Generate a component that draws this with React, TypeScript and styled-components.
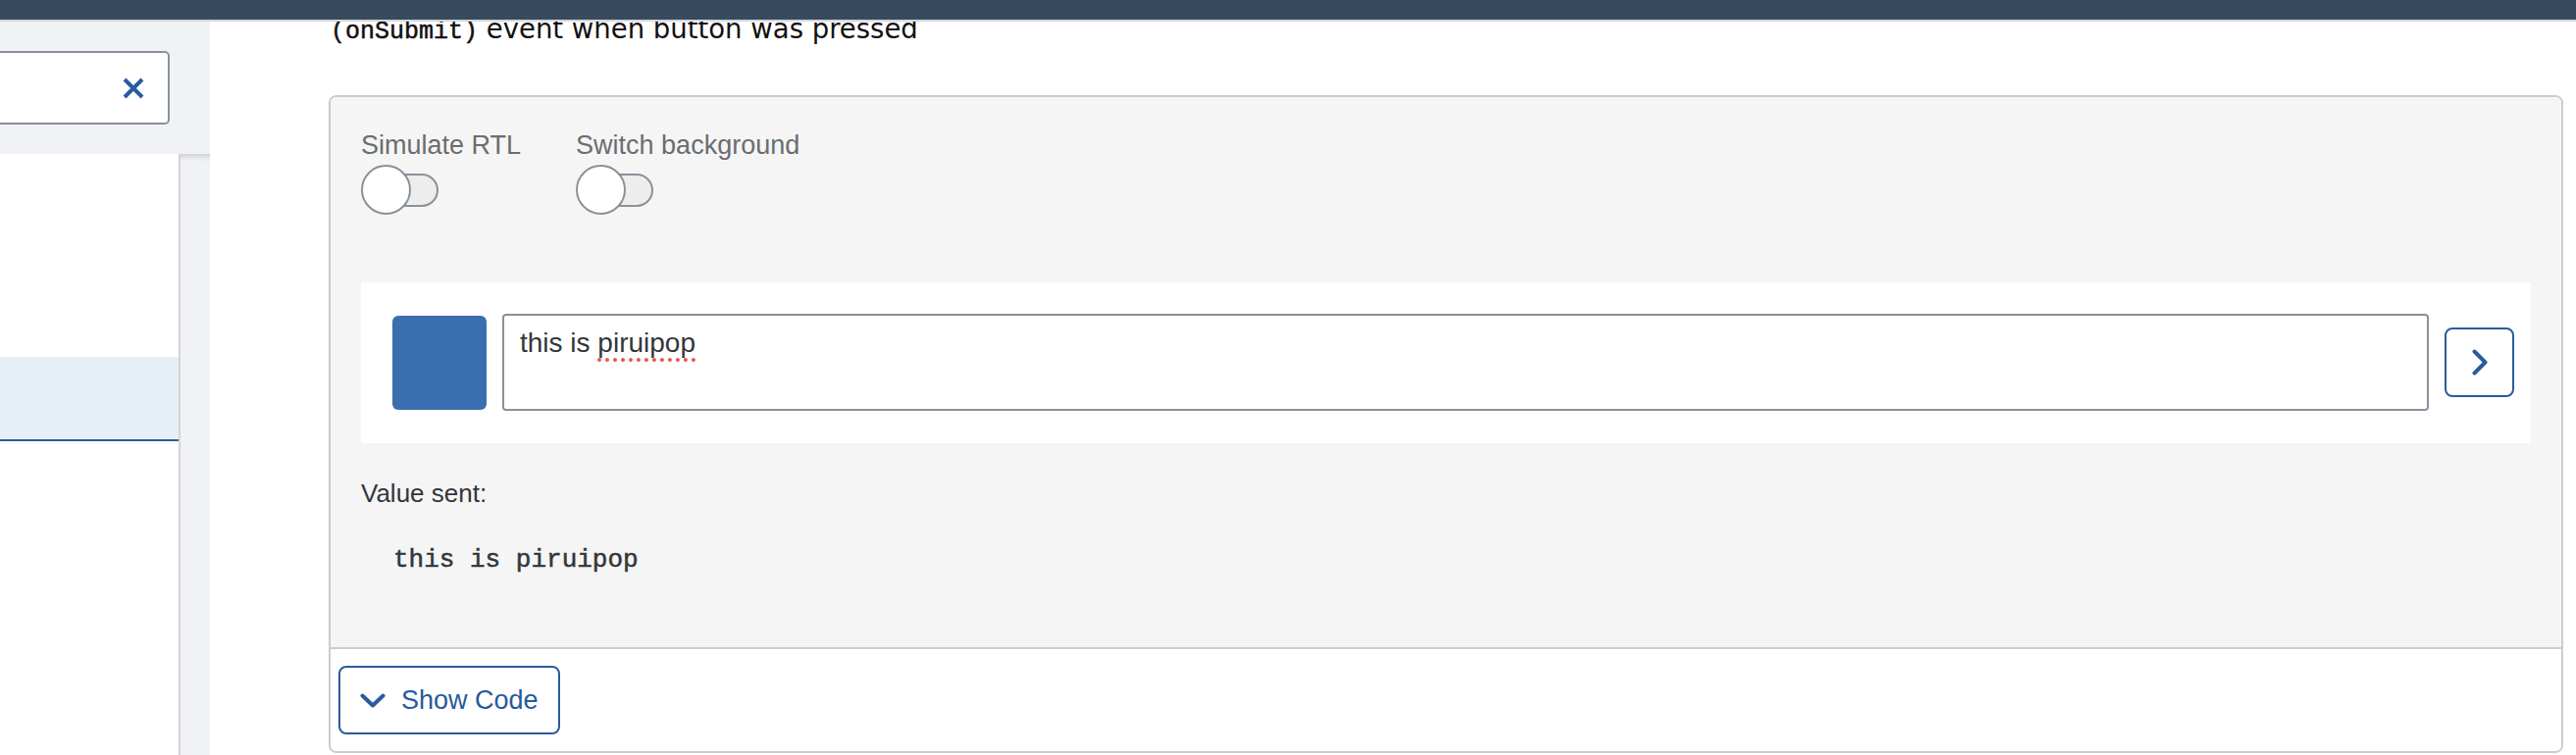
import styled, { createGlobalStyle } from "styled-components";

const GlobalStyle = createGlobalStyle`
  html, body {
    margin: 0;
    padding: 0;
    height: 100%;
    overflow: hidden;
    background: #ffffff;
    font-family: "Liberation Sans", Arial, sans-serif;
  }

  #root {
    height: 100%;
  }

  *, *::before, *::after {
    box-sizing: border-box;
  }
`;

const App = () => {
    return (
        <>
            <GlobalStyle />
            <ShellBar />
            <Layout>
                <Sidebar>
                    <SearchArea>
                        <SearchBox>
                            <svg width="22" height="22" viewBox="0 0 22 22">
                                <path d="M2 2 L20 20 M20 2 L2 20" stroke="#2a5b9e" strokeWidth="4" fill="none" />
                            </svg>
                        </SearchBox>
                    </SearchArea>
                    <NavArea>
                        <NavList>
                            <NavItem />
                            <NavItem />
                            <NavItem selected />
                        </NavList>
                        <ScrollTrack />
                    </NavArea>
                </Sidebar>
                <Main>
                    <Intro>
                        <InlineCode>(onSubmit)</InlineCode> event when button was pressed
                    </Intro>
                    <Card>
                        <Preview>
                            <Toggles>
                                <ToggleField>
                                    <ToggleLabel>Simulate RTL</ToggleLabel>
                                    <Switch>
                                        <Knob />
                                        <Track />
                                    </Switch>
                                </ToggleField>
                                <ToggleField>
                                    <ToggleLabel>Switch background</ToggleLabel>
                                    <Switch>
                                        <Knob />
                                        <Track />
                                    </Switch>
                                </ToggleField>
                            </Toggles>
                            <ComposerRow>
                                <Avatar />
                                <TextBox>
                                    this is <Misspelled>piruipop</Misspelled>
                                </TextBox>
                                <SendButton>
                                    <svg width="16" height="27" viewBox="0 0 16 27">
                                        <path
                                            d="M2.5 2.5 L13.5 13.5 L2.5 24.5"
                                            stroke="#2a5b9e"
                                            strokeWidth="4"
                                            strokeLinecap="round"
                                            strokeLinejoin="round"
                                            fill="none"
                                        />
                                    </svg>
                                </SendButton>
                            </ComposerRow>
                            <ValueLabel>Value sent:</ValueLabel>
                            <ValueOutput>this is piruipop</ValueOutput>
                        </Preview>
                        <CardFooter>
                            <ShowCodeButton>
                                <svg width="26" height="15" viewBox="0 0 26 15">
                                    <path
                                        d="M2.5 2.5 L13 12.5 L23.5 2.5"
                                        stroke="#2a5b9e"
                                        strokeWidth="4"
                                        strokeLinecap="round"
                                        strokeLinejoin="round"
                                        fill="none"
                                    />
                                </svg>
                                Show Code
                            </ShowCodeButton>
                        </CardFooter>
                    </Card>
                </Main>
            </Layout>
        </>
    );
};

export default App;

const ShellBar = styled.header`
    position: fixed;
    top: 0;
    left: 0;
    right: 0;
    height: 22px;
    background: #384a5e;
    border-bottom: 2px solid #d3d6da;
    z-index: 10;
`;

const Layout = styled.div`
    display: flex;
    height: 100vh;
`;

const Sidebar = styled.aside`
    width: 214px;
    flex-shrink: 0;
    display: flex;
    flex-direction: column;
    padding-top: 22px;
    overflow: hidden;
`;

const SearchArea = styled.div`
    height: 135px;
    background: #f1f2f5;
    display: flex;
    align-items: center;
`;

const SearchBox = styled.div`
    flex-shrink: 0;
    width: 300px;
    height: 75px;
    margin-left: -127px;
    background: #ffffff;
    border: 2px solid #89919a;
    border-radius: 5px;
    display: flex;
    align-items: center;
    justify-content: flex-end;
    padding-right: 24px;
`;

const NavArea = styled.div`
    flex: 1;
    display: flex;
`;

const NavList = styled.ul`
    flex: 1;
    margin: 0;
    padding: 35px 0 0;
    list-style: none;
    background: #ffffff;
    border-right: 2px solid #d4d4d4;
`;

const NavItem = styled.li<{ selected?: boolean }>`
    height: 86px;
    background: ${({ selected }) => (selected ? "#e6eef8" : "transparent")};
    border-bottom: 2px solid ${({ selected }) => (selected ? "#2b5c9d" : "transparent")};
`;

const ScrollTrack = styled.div`
    width: 30px;
    background: #f1f2f5;
    box-shadow: inset 0 7px 6px -5px rgba(0, 0, 0, 0.18);
`;

const Main = styled.main`
    flex: 1;
    padding: 0 13px 0 121px;
    display: flex;
    flex-direction: column;
`;

const Intro = styled.p`
    margin: 13px 0 52px;
    font-family: "DejaVu Sans", sans-serif;
    font-size: 27.5px;
    line-height: 32px;
    color: #111111;
    padding-left: 2px;
`;

const InlineCode = styled.code`
    font-family: "Liberation Mono", "Courier New", monospace;
    font-size: 25px;
    line-height: 1;
    -webkit-text-stroke: 0.5px currentColor;
`;

const Card = styled.section`
    border: 2px solid #cccccc;
    border-radius: 8px;
    overflow: hidden;
`;

const Preview = styled.div`
    background: #f5f5f5;
    padding: 34px 31px 74px;
    border-bottom: 2px solid #cccccc;
`;

const Toggles = styled.div`
    display: flex;
    gap: 56px;
`;

const ToggleField = styled.div`
    display: flex;
    flex-direction: column;
    gap: 5px;
`;

const ToggleLabel = styled.label`
    font-size: 27px;
    line-height: 30px;
    color: #6a6d70;
`;

const Switch = styled.div`
    display: flex;
    align-items: center;
    height: 51px;
`;

const Knob = styled.span`
    width: 51px;
    height: 51px;
    border-radius: 50%;
    background: #ffffff;
    border: 2px solid #89919a;
    position: relative;
    z-index: 1;
`;

const Track = styled.span`
    width: 53px;
    height: 34px;
    margin-left: -25px;
    background: #ededed;
    border: 2px solid #89919a;
    border-radius: 0 17px 17px 0;
`;

const ComposerRow = styled.div`
    margin-top: 69px;
    background: #ffffff;
    padding: 32px 17px 33px 32px;
    display: flex;
    align-items: center;
    gap: 16px;
`;

const Avatar = styled.div`
    width: 96px;
    height: 96px;
    flex-shrink: 0;
    border-radius: 6px;
    background: #3b6eae;
`;

const TextBox = styled.div`
    flex: 1;
    height: 99px;
    padding: 12px 16px;
    border: 2px solid #89919a;
    border-radius: 4px;
    background: #ffffff;
    font-size: 28px;
    line-height: 32px;
    color: #32363a;
`;

const Misspelled = styled.span`
    text-decoration: underline dotted #e9574a;
    text-decoration-thickness: 4px;
    text-underline-offset: 6px;
`;

const SendButton = styled.button`
    width: 71px;
    height: 71px;
    flex-shrink: 0;
    padding: 0;
    background: #ffffff;
    border: 2px solid #2a5b9e;
    border-radius: 8px;
    display: flex;
    align-items: center;
    justify-content: center;
`;

const ValueLabel = styled.div`
    margin-top: 36px;
    font-size: 26px;
    line-height: 30px;
    color: #32363a;
`;

const ValueOutput = styled.pre`
    margin: 38px 0 0;
    padding-left: 33px;
    font-family: "Liberation Mono", "Courier New", monospace;
    font-size: 26px;
    line-height: 30px;
    color: #32363a;
    -webkit-text-stroke: 0.5px currentColor;
`;

const CardFooter = styled.div`
    background: #ffffff;
    padding: 17px 8px;
`;

const ShowCodeButton = styled.button`
    height: 70px;
    padding: 0 20px;
    display: inline-flex;
    align-items: center;
    gap: 16px;
    background: #ffffff;
    border: 2px solid #2a5b9e;
    border-radius: 8px;
    font-family: "Liberation Sans", Arial, sans-serif;
    font-size: 27px;
    color: #27599c;
`;
